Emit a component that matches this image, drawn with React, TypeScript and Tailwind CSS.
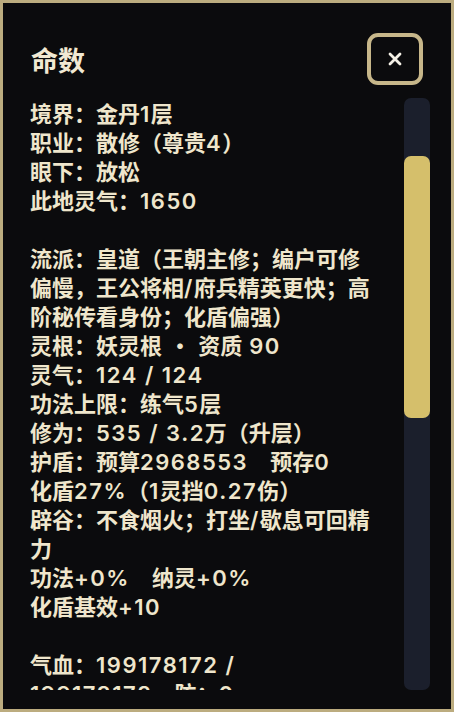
import React from "react";

const lines: string[][] = [
  ["境界：金丹1层"],
  ["职业：散修（尊贵4）"],
  ["眼下：放松"],
  ["此地灵气：1650"],
  [""],
  ["流派：皇道（王朝主修；编户可修偏慢，王公将相/府兵精英更快；高阶秘传看身份；化盾偏强）"],
  ["灵根：妖灵根 · 资质 90"],
  ["灵气：124 / 124"],
  ["功法上限：练气5层"],
  ["修为：535 / 3.2万（升层）"],
  ["护盾：预算2968553　预存0"],
  ["化盾27%（1灵挡0.27伤）"],
  ["辟谷：不食烟火；打坐/歇息可回精力"],
  ["功法+0%　纳灵+0%"],
  ["化盾基效+10"],
  [""],
  ["气血：199178172 /", "199178172　防：0"],
  ["精力：100 / 100"],
];

function Rich({ text }: { text: string }) {
  const parts = text.split(/([\x20-\x7E]+)/);
  return (
    <>
      {parts.map((p, i) =>
        /^[\x20-\x7E]+$/.test(p) ? (
          <span key={i} className="font-['Inter'] font-semibold tracking-[1.5px] leading-[10px] whitespace-pre-wrap">
            {p}
          </span>
        ) : (
          <span key={i}>{p}</span>
        )
      )}
    </>
  );
}

export default function App() {
  return (
    <div
      className="w-[454px] h-[712px] bg-[#0b0b0d] border-[3px] border-[#bcac7f] flex flex-col pl-[27px] pr-[21px] pt-[30px] overflow-hidden"
      style={{ fontFamily: '"Noto Sans CJK SC", "Noto Sans", sans-serif' }}
    >
      <div className="flex items-center justify-between h-[52px] shrink-0">
        <div className="text-[27px] font-bold text-[#f1e9d3] leading-none pl-[1px] mt-[1px]">命数</div>
        <button className="w-[56px] h-[52px] mr-[7px] rounded-[11px] border-[4px] border-[#c7b78a] bg-[#0b0b0d] flex items-center justify-center">
          <svg width="14" height="14" viewBox="0 0 14 14">
            <path d="M2 2 L12 12 M12 2 L2 12" stroke="#f4f0e6" strokeWidth="2.8" strokeLinecap="round" />
          </svg>
        </button>
      </div>
      <div className="flex mt-[13px] h-[592px] gap-[29px]">
        <div className="w-[345px] h-full overflow-hidden text-[22px] leading-[29px] font-bold text-[#efe6cc]">
          {lines.map((group, i) => (
            <div key={i} className="min-h-[29px] break-all">
              {group.map((l, j) => (
                <div key={j}>
                  <Rich text={l} />
                </div>
              ))}
            </div>
          ))}
        </div>
        <div className="w-[26px] h-full rounded-[7px] bg-[#1b1f2c] flex flex-col">
          <div className="mt-[58px] h-[262px] rounded-[7px] bg-[#d5bf6b]" />
        </div>
      </div>
    </div>
  );
}
